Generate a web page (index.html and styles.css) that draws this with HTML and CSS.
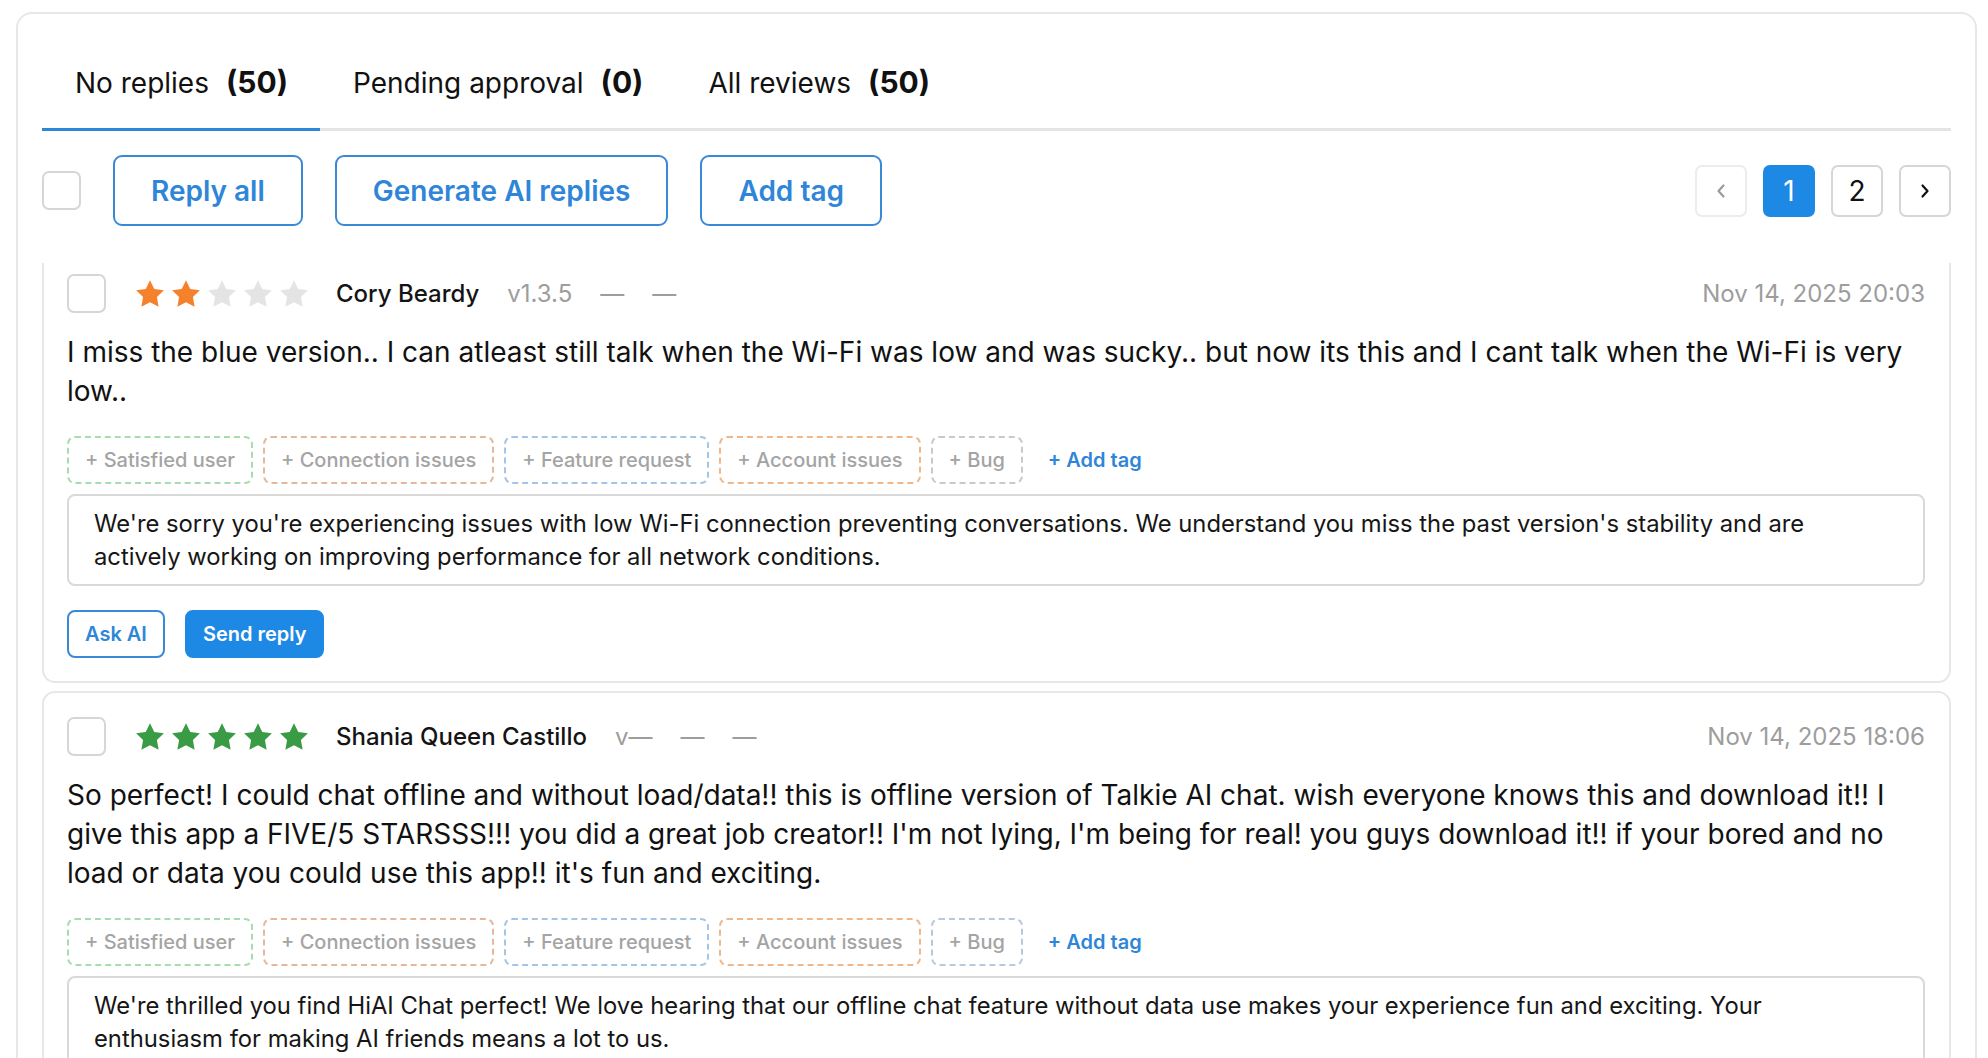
FILE: index.html
```html
<!DOCTYPE html>
<html lang="en">
<head>
<meta charset="utf-8">
<title>Reviews</title>
<link rel="stylesheet" href="styles.css">
</head>
<body>
<div class="panel">
  <div class="tabs">
    <div class="tab active">No replies<span class="count">(50)</span></div>
    <div class="tab">Pending approval<span class="count">(0)</span></div>
    <div class="tab">All reviews<span class="count">(50)</span></div>
  </div>

  <div class="toolbar">
    <span class="checkbox"></span>
    <button class="btn-lg">Reply all</button>
    <button class="btn-lg">Generate AI replies</button>
    <button class="btn-lg">Add tag</button>
    <div class="pager">
      <button class="page disabled"><svg width="14" height="18" viewBox="0 0 14 18"><path d="M9.5 3.5L4.5 9l5 5.5" fill="none" stroke="currentColor" stroke-width="2.2" stroke-linecap="round" stroke-linejoin="round"/></svg></button>
      <button class="page current">1</button>
      <button class="page">2</button>
      <button class="page"><svg width="14" height="18" viewBox="0 0 14 18"><path d="M4.5 3.5L9.5 9l-5 5.5" fill="none" stroke="currentColor" stroke-width="2.2" stroke-linecap="round" stroke-linejoin="round"/></svg></button>
    </div>
  </div>

  <div class="list">
    <div class="review first">
      <div class="review-head">
        <span class="checkbox"></span>
        <div class="stars orange">
          <svg class="star on" viewBox="0 0 24 24"><path d="M12 1.6l3.2 6.6 7.2 1-5.2 5.1 1.25 7.2L12 18.1l-6.45 3.4 1.25-7.2-5.2-5.1 7.2-1z"/></svg>
          <svg class="star on" viewBox="0 0 24 24"><path d="M12 1.6l3.2 6.6 7.2 1-5.2 5.1 1.25 7.2L12 18.1l-6.45 3.4 1.25-7.2-5.2-5.1 7.2-1z"/></svg>
          <svg class="star" viewBox="0 0 24 24"><path d="M12 1.6l3.2 6.6 7.2 1-5.2 5.1 1.25 7.2L12 18.1l-6.45 3.4 1.25-7.2-5.2-5.1 7.2-1z"/></svg>
          <svg class="star" viewBox="0 0 24 24"><path d="M12 1.6l3.2 6.6 7.2 1-5.2 5.1 1.25 7.2L12 18.1l-6.45 3.4 1.25-7.2-5.2-5.1 7.2-1z"/></svg>
          <svg class="star" viewBox="0 0 24 24"><path d="M12 1.6l3.2 6.6 7.2 1-5.2 5.1 1.25 7.2L12 18.1l-6.45 3.4 1.25-7.2-5.2-5.1 7.2-1z"/></svg>
        </div>
        <span class="author">Cory Beardy</span>
        <span class="meta">v1.3.5</span>
        <span class="meta">—</span>
        <span class="meta">—</span>
        <span class="date">Nov 14, 2025 20:03</span>
      </div>
      <p class="review-text">I miss the blue version.. I can atleast still talk when the Wi-Fi was low and was sucky.. but now its this and I cant talk when the Wi-Fi is very low..</p>
      <div class="tags">
        <span class="tag green">+ Satisfied user</span>
        <span class="tag tan">+ Connection issues</span>
        <span class="tag blue">+ Feature request</span>
        <span class="tag orange">+ Account issues</span>
        <span class="tag gray">+ Bug</span>
        <span class="add-tag">+ Add tag</span>
      </div>
      <div class="reply-box">We're sorry you're experiencing issues with low Wi-Fi connection preventing conversations. We understand you miss the past version's stability and are actively working on improving performance for all network conditions.</div>
      <div class="actions">
        <button class="btn-sm outline">Ask AI</button>
        <button class="btn-sm filled">Send reply</button>
      </div>
    </div>

    <div class="review">
      <div class="review-head">
        <span class="checkbox"></span>
        <div class="stars green">
          <svg class="star on" viewBox="0 0 24 24"><path d="M12 1.6l3.2 6.6 7.2 1-5.2 5.1 1.25 7.2L12 18.1l-6.45 3.4 1.25-7.2-5.2-5.1 7.2-1z"/></svg>
          <svg class="star on" viewBox="0 0 24 24"><path d="M12 1.6l3.2 6.6 7.2 1-5.2 5.1 1.25 7.2L12 18.1l-6.45 3.4 1.25-7.2-5.2-5.1 7.2-1z"/></svg>
          <svg class="star on" viewBox="0 0 24 24"><path d="M12 1.6l3.2 6.6 7.2 1-5.2 5.1 1.25 7.2L12 18.1l-6.45 3.4 1.25-7.2-5.2-5.1 7.2-1z"/></svg>
          <svg class="star on" viewBox="0 0 24 24"><path d="M12 1.6l3.2 6.6 7.2 1-5.2 5.1 1.25 7.2L12 18.1l-6.45 3.4 1.25-7.2-5.2-5.1 7.2-1z"/></svg>
          <svg class="star on" viewBox="0 0 24 24"><path d="M12 1.6l3.2 6.6 7.2 1-5.2 5.1 1.25 7.2L12 18.1l-6.45 3.4 1.25-7.2-5.2-5.1 7.2-1z"/></svg>
        </div>
        <span class="author">Shania Queen Castillo</span>
        <span class="meta">v—</span>
        <span class="meta">—</span>
        <span class="meta">—</span>
        <span class="date">Nov 14, 2025 18:06</span>
      </div>
      <p class="review-text">So perfect! I could chat offline and without load/data!! this is offline version of Talkie AI chat. wish everyone knows this and download it!! I give this app a FIVE/5 STARSSS!!! you did a great job creator!! I'm not lying, I'm being for real! you guys download it!! if your bored and no load or data you could use this app!! it's fun and exciting.</p>
      <div class="tags">
        <span class="tag green">+ Satisfied user</span>
        <span class="tag tan">+ Connection issues</span>
        <span class="tag blue">+ Feature request</span>
        <span class="tag orange">+ Account issues</span>
        <span class="tag bluegray">+ Bug</span>
        <span class="add-tag">+ Add tag</span>
      </div>
      <div class="reply-box">We're thrilled you find HiAI Chat perfect! We love hearing that our offline chat feature without data use makes your experience fun and exciting. Your enthusiasm for making AI friends means a lot to us.</div>
      <div class="actions">
        <button class="btn-sm outline">Ask AI</button>
        <button class="btn-sm filled">Send reply</button>
      </div>
    </div>
  </div>
</div>
</body>
</html>
```

FILE: styles.css
```css
* { box-sizing: border-box; }
html, body {
  margin: 0;
  height: 1058px;
  overflow: hidden;
  background: #ffffff;
  font-family: Inter, "Noto Sans", "Liberation Sans", sans-serif;
  color: #111111;
}
button { font-family: inherit; }

.panel {
  margin: 12px 11px 0 16px;
  border: 2px solid #e7e7e7;
  border-radius: 16px;
  padding: 23px 24px 0 24px;
  height: 1100px;
}

/* tabs */
.tabs {
  display: flex;
  border-bottom: 3px solid #e4e4e4;
}
.tab {
  padding: 28px 32px 28px 33px;
  font-size: 28px;
  line-height: 34px;
  color: #111;
  margin-bottom: -3px;
  border-bottom: 3px solid transparent;
}
.tab.active { border-bottom-color: #2e86d6; }
.count { font-weight: 700; font-size: 30px; margin-left: 17px; }

/* toolbar */
.toolbar {
  display: flex;
  align-items: center;
  gap: 32px;
  margin-top: 24px;
}
.checkbox {
  display: inline-block;
  flex: none;
  width: 39px;
  height: 39px;
  border: 2px solid #d6d6d6;
  border-radius: 7px;
  background: #fff;
}
.btn-lg {
  height: 71px;
  padding: 0 36px;
  border: 2px solid #3a89d6;
  border-radius: 9px;
  background: #fff;
  color: #2f86d8;
  font-size: 28px;
  font-weight: 600;
}
.pager {
  margin-left: auto;
  display: flex;
  gap: 16px;
}
.page {
  width: 52px;
  height: 52px;
  display: flex;
  align-items: center;
  justify-content: center;
  border: 2px solid #d6d6d6;
  border-radius: 7px;
  background: #fff;
  color: #111;
  font-size: 28px;
  padding: 0;
}
.page.disabled { border-color: #ececec; color: #9a9a9a; }
.page.current { background: #1e88e5; border-color: #1e88e5; color: #fff; }

/* list */
.list {
  margin-top: 37px;
  overflow: hidden;
  height: 900px;
  display: flex;
  flex-direction: column;
  gap: 8px;
}
.review {
  flex: none;
  border: 2px solid #e7e7e7;
  border-radius: 13px;
  padding: 24px 24px 23px 23px;
}
.review.first { margin-top: -15px; }

.review-head {
  display: flex;
  align-items: center;
  gap: 28px;
  height: 39px;
}
.stars { display: flex; gap: 4px; margin-right: -2px; }
.star { width: 32px; height: 32px; fill: #e4e4e4; }
.stars.orange .star.on { fill: #f5812a; }
.stars.green .star.on { fill: #3a9b45; }
.author { font-size: 24px; font-weight: 500; color: #141414; }
.meta { font-size: 24px; color: #9d9d9d; }
.date { margin-left: auto; font-size: 24px; color: #9d9d9d; }

.review-text {
  margin: 20px 0 0 0;
  font-size: 28px;
  line-height: 39px;
  color: #111;
}

.tags {
  display: flex;
  align-items: center;
  gap: 10px;
  margin-top: 25px;
}
.tag {
  border: 2px dashed #cccccc;
  border-radius: 8px;
  padding: 10px 16px;
  font-size: 20px;
  line-height: 24px;
  font-weight: 500;
  color: #a4a4a4;
}
.tag.green { border-color: #a6dcae; }
.tag.tan { border-color: #e2b99c; }
.tag.blue { border-color: #a4c6e6; }
.tag.orange { border-color: #f0b88a; }
.tag.gray { border-color: #c9c9c9; }
.tag.bluegray { border-color: #b7c9de; }
.add-tag {
  margin-left: 15px;
  font-size: 20px;
  font-weight: 600;
  color: #2f86d8;
}

.reply-box {
  margin-top: 10px;
  border: 2px solid #d9d9d9;
  border-radius: 8px;
  padding: 11px 60px 11px 25px;
  font-size: 23.8px;
  line-height: 33px;
  color: #161616;
}

.actions {
  display: flex;
  gap: 20px;
  margin-top: 24px;
}
.btn-sm {
  height: 48px;
  padding: 0 16px;
  border: 2px solid #3a89d6;
  border-radius: 8px;
  font-size: 20px;
  font-weight: 600;
}
.btn-sm.outline { background: #fff; color: #2f86d8; }
.btn-sm.filled { background: #1e88e5; border-color: #1e88e5; color: #fff; }
```
